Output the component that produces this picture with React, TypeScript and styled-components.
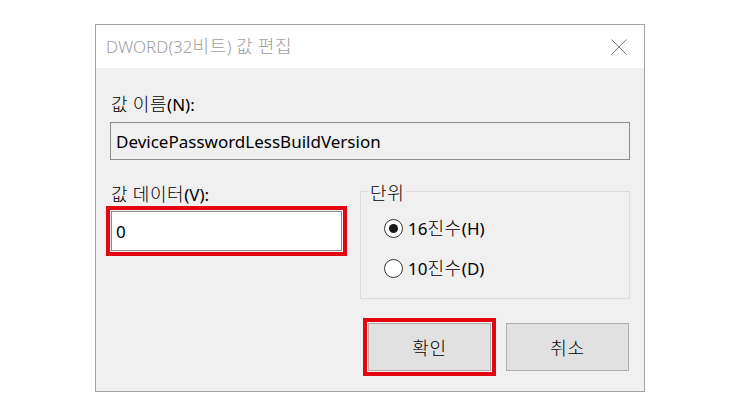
import React from "react";
import styled, { createGlobalStyle } from "styled-components";

const Global = createGlobalStyle`
  html, body { margin: 0; padding: 0; background: #ffffff; }
  body { font-family: "Noto Sans", "Noto Sans CJK KR", sans-serif; }
  * { box-sizing: border-box; }
`;

const Page = styled.div`
  width: 740px;
  height: 416px;
  padding: 24px 0 0 95px;
  background: #ffffff;
`;

const Dialog = styled.div`
  width: 550px;
  height: 368px;
  border: 1px solid #a3a3a3;
  background: #f0f0f0;
  display: flex;
  flex-direction: column;
`;

const TitleBar = styled.div`
  height: 43px;
  background: #ffffff;
  display: flex;
  align-items: center;
  justify-content: space-between;
  padding: 0 17px 0 10px;
`;

const Title = styled.span`
  font-size: 17px;
  font-weight: 300;
  line-height: 20px;
  color: #a0a0a0;
  white-space: nowrap;
`;

/* Korean runs: the hangul in the reference is drawn larger than the Latin */
const Ko = styled.span`
  font-family: "Noto Sans CJK KR", sans-serif;
  font-size: 18px;
  font-weight: 300;
  line-height: 1;
  letter-spacing: 0.6px;
`;

const Body = styled.div`
  flex: 1;
  display: flex;
  flex-direction: column;
  padding: 26px 14px 0 14px;
`;

const Label = styled.div`
  height: 20px;
  font-size: 17px;
  line-height: 20px;
  color: #000;
  margin-left: 1px;
  white-space: nowrap;
`;

const NameBox = styled.div`
  margin-top: 8px;
  height: 38px;
  border: 1px solid #8c8c8c;
  background: #f0f0f0;
  display: flex;
  align-items: center;
  padding-left: 5px;
  font-size: 17px;
  color: #000;
`;

const Row = styled.div`
  display: flex;
  margin-top: 24px;
`;

const LeftCol = styled.div`
  width: 250px;
  display: flex;
  flex-direction: column;
`;

const DataInput = styled.div<{ $highlight?: boolean }>`
  margin: 7px 0 0 1px;
  width: 231px;
  height: 40px;
  border: 1px solid #8c8c8c;
  background: #ffffff;
  display: flex;
  align-items: center;
  padding-left: 4px;
  font-size: 17px;
  color: #000;
  outline: ${(p) => (p.$highlight ? "4px solid #e30613" : "none")};
  outline-offset: 1px;
`;

const Group = styled.fieldset`
  flex: 1;
  margin: -5px 0 0 0;
  border: 1px solid #dcdcdc;
  padding: 15px 0 20px 0;
  min-width: 0;
`;

const Legend = styled.legend`
  height: 24px;
  font-size: 17px;
  line-height: 20px;
  padding: 4px 2px 0 2px;
  margin-left: 7px;
  color: #000;
`;

const RadioList = styled.div`
  display: flex;
  flex-direction: column;
  gap: 20px;
  padding-left: 23px;
`;

const RadioRow = styled.div`
  display: flex;
  align-items: center;
  height: 20px;
  gap: 5px;
  font-size: 17px;
  line-height: 20px;
  color: #000;
`;

const RadioText = styled.span`
  white-space: nowrap;
`;

const RadioCircle = styled.span<{ $checked?: boolean }>`
  width: 19px;
  height: 19px;
  border-radius: 50%;
  border: 1px solid #333;
  background: #fff;
  display: flex;
  align-items: center;
  justify-content: center;
  &::after {
    content: "";
    width: 9px;
    height: 9px;
    border-radius: 50%;
    background: #1a1a1a;
    display: ${(p) => (p.$checked ? "block" : "none")};
  }
`;

const Buttons = styled.div`
  display: flex;
  justify-content: flex-end;
  gap: 15px;
  margin-top: 24px;
  padding-right: 1px;
`;

const Button = styled.div<{ $highlight?: boolean }>`
  width: 123px;
  height: 48px;
  background: #e1e1e1;
  border: 1px solid #adadad;
  display: flex;
  align-items: center;
  justify-content: center;
  color: #000;
  outline: ${(p) => (p.$highlight ? "4px solid #e30613" : "none")};
  outline-offset: 1px;
`;

const CloseIcon = () => (
  <svg width="16" height="16" viewBox="0 0 16 16">
    <path d="M0.5 0.5 L15.5 15.5 M15.5 0.5 L0.5 15.5" stroke="#7a7a7a" strokeWidth="1" fill="none" />
  </svg>
);

export default function App() {
  return (
    <>
      <Global />
      <Page>
        <Dialog>
          <TitleBar>
            <Title>
              DWORD(32<Ko>비트</Ko>) <Ko>값 편집</Ko>
            </Title>
            <CloseIcon />
          </TitleBar>
          <Body>
            <Label>
              <Ko>값 이름</Ko>(N):
            </Label>
            <NameBox>DevicePasswordLessBuildVersion</NameBox>
            <Row>
              <LeftCol>
                <Label>
                  <Ko>값 데이터</Ko>(V):
                </Label>
                <DataInput $highlight>0</DataInput>
              </LeftCol>
              <Group>
                <Legend>
                  <Ko>단위</Ko>
                </Legend>
                <RadioList>
                  <RadioRow>
                    <RadioCircle $checked />
                    <RadioText>
                      16<Ko>진수</Ko>(H)
                    </RadioText>
                  </RadioRow>
                  <RadioRow>
                    <RadioCircle />
                    <RadioText>
                      10<Ko>진수</Ko>(D)
                    </RadioText>
                  </RadioRow>
                </RadioList>
              </Group>
            </Row>
            <Buttons>
              <Button $highlight>
                <Ko>확인</Ko>
              </Button>
              <Button>
                <Ko>취소</Ko>
              </Button>
            </Buttons>
          </Body>
        </Dialog>
      </Page>
    </>
  );
}
